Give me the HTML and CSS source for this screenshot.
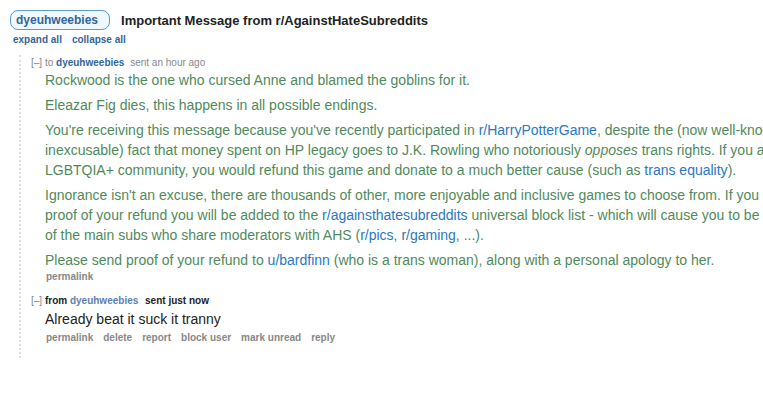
FILE: index.html
```html
<!DOCTYPE html>
<html>
<head>
<meta charset="utf-8">
<link rel="stylesheet" href="styles.css">
</head>
<body>
<div class="page">
  <div class="header">
    <span class="pill">dyeuhweebies</span>
    <span class="title">Important Message from r/AgainstHateSubreddits</span>
  </div>
  <div class="expand">
    <a>expand all</a>
    <a>collapse all</a>
  </div>
  <div class="thread">
    <div class="msg">
      <div class="tagline"><span class="toggle">[–]</span> to <b class="user">dyeuhweebies</b> <span class="time">sent an hour ago</span></div>
      <div class="md green">
        <p>Rockwood is the one who cursed Anne and blamed the goblins for it.</p>
        <p>Eleazar Fig dies, this happens in all possible endings.</p>
        <p>You're receiving this message because you've recently participated in <a>r/HarryPotterGame</a>, despite the (now well-known and<br>inexcusable) fact that money spent on HP legacy goes to J.K. Rowling who notoriously <em>opposes</em> trans rights. If you are part of the<br>LGBTQIA+ community, you would refund this game and donate to a much better cause (such as <a>trans equality</a>).</p>
        <p>Ignorance isn't an excuse, there are thousands of other, more enjoyable and inclusive games to choose from. If you provide<br>proof of your refund you will be added to the <a>r/againsthatesubreddits</a> universal block list - which will cause you to be banned from<br>of the main subs who share moderators with AHS (<a>r/pics</a>, <a>r/gaming</a>, ...).</p>
        <p>Please send proof of your refund to <a>u/bardfinn</a> (who is a trans woman), along with a personal apology to her.</p>
      </div>
      <ul class="buttons"><li>permalink</li></ul>
    </div>
    <div class="msg msg2">
      <div class="tagline"><span class="toggle">[–]</span> <b class="dark">from</b> <b class="user2">dyeuhweebies</b> <b class="dark time2">sent just now</b></div>
      <div class="md dark-text">
        <p>Already beat it suck it tranny</p>
      </div>
      <ul class="buttons">
        <li>permalink</li>
        <li>delete</li>
        <li>report</li>
        <li>block user</li>
        <li>mark unread</li>
        <li>reply</li>
      </ul>
    </div>
  </div>
</div>
</body>
</html>
```
FILE: styles.css
```css
html, body {
  margin: 0;
  padding: 0;
  overflow: hidden;
  background: #ffffff;
}
body {
  font-family: "Liberation Sans", Arial, sans-serif;
  width: 763px;
  height: 400px;
}
.page {
  display: flex;
  flex-direction: column;
}
.header {
  display: flex;
  align-items: center;
  gap: 11px;
  padding: 10px 0 0 10px;
}
.pill {
  display: inline-block;
  height: 18px;
  line-height: 18px;
  padding: 0 11px 0 5px;
  border: 1px solid #5f99cf;
  border-radius: 8px;
  background: #eff7ff;
  color: #336699;
  font-size: 12px;
  font-weight: bold;
}
.title {
  font-size: 13px;
  font-weight: bold;
  color: #222;
}
.expand {
  display: flex;
  gap: 10px;
  margin-top: 4px;
  padding-left: 13px;
  font-size: 10px;
  line-height: 12px;
  font-weight: bold;
}
.expand a {
  color: #336699;
}
.thread {
  margin: 9px 0 0 19px;
  border-left: 2px dotted #dddddd;
  padding: 1px 0 13px 10px;
  width: 1000px;
}
.tagline {
  font-size: 10px;
  line-height: 14px;
  color: #888888;
  white-space: nowrap;
}
.toggle {
  color: #7a8599;
}
.user {
  color: #336699;
}
.user2 {
  color: #5f7fab;
}
.dark {
  color: #222;
}
.time {
  margin-left: 3px;
}
.time2 {
  margin-left: 4px;
}
.md {
  padding-left: 14px;
  font-size: 14px;
  line-height: 20px;
}
.md p {
  margin: 0 0 5px 0;
  white-space: nowrap;
}
.md p:last-child {
  margin-bottom: 0;
}
.green {
  color: #508a5b;
}
.green a {
  color: #2a77c4;
}
.dark-text {
  color: #222;
}
.buttons {
  list-style: none;
  margin: 0;
  padding: 0 0 0 15px;
  display: flex;
  gap: 10px;
  font-size: 10px;
  line-height: 14px;
  font-weight: bold;
  color: #888888;
}
.msg2 {
  margin-top: 10px;
}
.msg2 .md {
  margin-top: 1px;
}
.msg2 .buttons {
  margin-top: 2px;
}
```
